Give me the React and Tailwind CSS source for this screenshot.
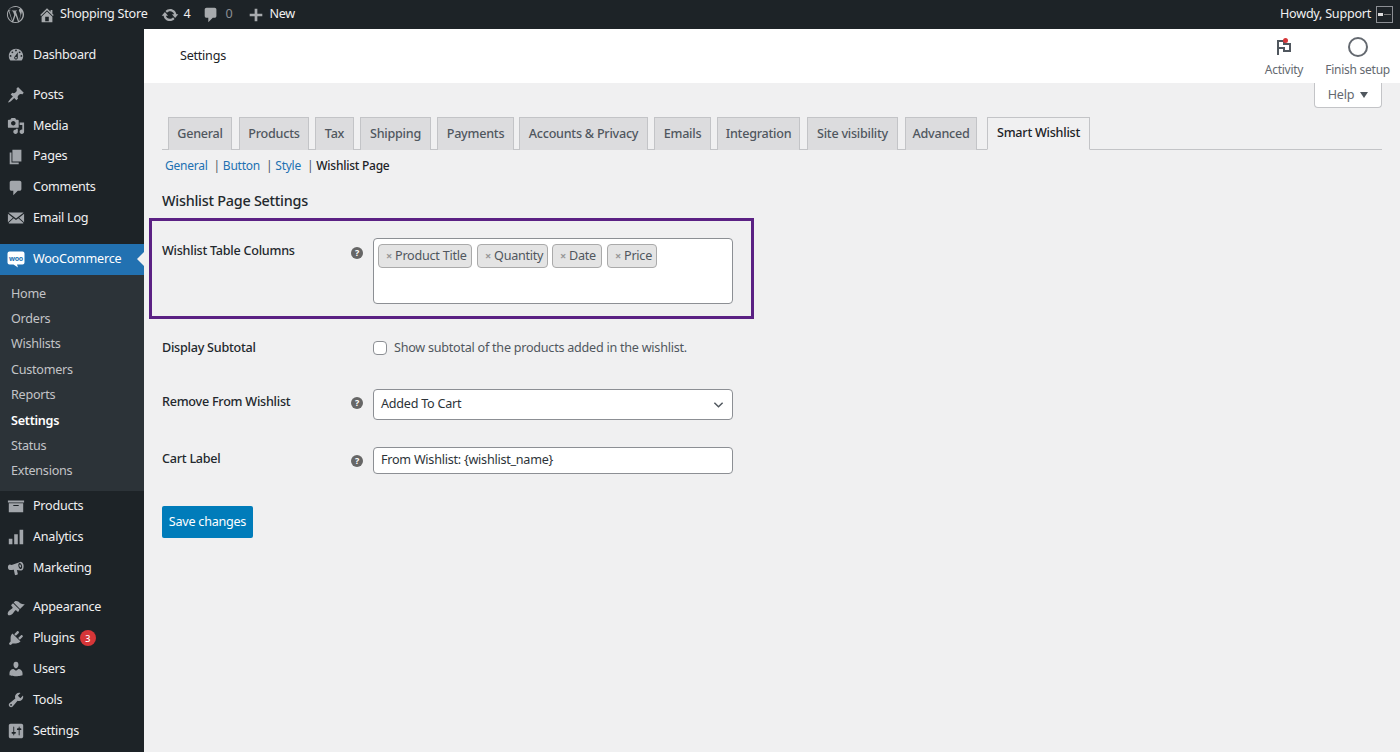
import React from "react";

const P = {
  dashboard: "M3.76 16h12.48c1.1-1.37 1.76-3.11 1.76-5 0-4.42-3.58-8-8-8s-8 3.58-8 8c0 1.89.66 3.63 1.76 5zM10 4c.55 0 1 .45 1 1s-.45 1-1 1-1-.45-1-1 .45-1 1-1zM6 6c.55 0 1 .45 1 1s-.45 1-1 1-1-.45-1-1 .45-1 1-1zm8 0c.55 0 1 .45 1 1s-.45 1-1 1-1-.45-1-1 .45-1 1-1zm-5.37 5.55L12 7v6c0 1.1-.9 2-2 2s-2-.9-2-2c0-.57.24-1.08.63-1.45zM4 10c.55 0 1 .45 1 1s-.45 1-1 1-1-.45-1-1 .45-1 1-1zm12 0c.55 0 1 .45 1 1s-.45 1-1 1-1-.45-1-1 .45-1 1-1zm-5 3c0-.55-.45-1-1-1s-1 .45-1 1 .45 1 1 1 1-.45 1-1z",
  post: "M10.44 3.02l1.82-1.82 6.36 6.35-1.83 1.82c-1.05-.68-2.48-.57-3.41.36l-.75.75c-.92.93-1.04 2.35-.35 3.41l-1.83 1.82-2.41-2.41-2.8 2.79c-.42.42-3.38 2.71-3.8 2.29s1.86-3.39 2.28-3.81l2.79-2.79L4.1 9.36l1.83-1.82c1.05.69 2.48.57 3.4-.36l.75-.75c.93-.92 1.05-2.35.36-3.41z",
  media: "M13 11V4c0-.55-.45-1-1-1h-1.67L9 1H5L3.67 3H2c-.55 0-1 .45-1 1v7c0 .55.45 1 1 1h10c.55 0 1-.45 1-1zM7 4.5c1.38 0 2.5 1.12 2.5 2.5S8.38 9.5 7 9.5 4.5 8.38 4.5 7 5.62 4.5 7 4.5zM14 6h5v10.5c0 1.38-1.12 2.5-2.5 2.5S14 17.88 14 16.5s1.12-2.5 2.5-2.5c.17 0 .34.02.5.05V9h-3V6zm-4 8.05V13h2v3.5c0 1.38-1.12 2.5-2.5 2.5S7 17.88 7 16.5 8.12 14 9.5 14c.17 0 .34.02.5.05z",
  page: "M6 15V2h10v13H6zm-1 1h8v2H3V5h2v11z",
  comment: "M5 2h9c1.1 0 2 .9 2 2v7c0 1.1-.9 2-2 2h-2l-5 5v-5H5c-1.1 0-2-.9-2-2V4c0-1.1.9-2 2-2z",
  email: "M2.5 4h15c.3 0 .6.1.8.3L10 10.6 1.7 4.3c.2-.2.5-.3.8-.3zM1 5.4l5.6 4.3L1 14.6V5.4zm18 0v9.2l-5.6-4.9L19 5.4zM7.4 10.3L10 12.3l2.6-2L18.4 15.6c-.2.3-.5.4-.9.4h-15c-.4 0-.7-.1-.9-.4l5.8-5.3z",
  archive: "M19 4v2H1V4h18zM2 7h16v10H2V7zm11 3V9H7v1h6z",
  chart: "M18 18V2h-4v16h4zm-6 0V7H8v11h4zm-6 0v-6H2v6h4z",
  megaphone: "M18.15 5.94c.46 1.62.38 3.22-.02 4.48-.42 1.28-1.26 2.13-2.27 2.35-.3.07-.6.08-.9.03L11 12.3l1 4.2c.1.5-.2.9-.7 1l-1.6.4c-.5.1-.9-.2-1-.7L7.6 12l-2.3.2c-.6-.3-1.4.1-2.1.1C2 12.3 1 10.9 1 9.2c0-1.7 1-3.1 2.2-3.1.7 0 1.4.3 2 .7l9.4-3.5c.4-.1.8-.2 1.2-.1 1.1.2 1.9 1.3 2.35 2.74zM15.6 11.2c1.1-.3 1.5-2 1-3.9-.5-1.9-1.7-3.1-2.8-2.8-1.1.3-1.5 2-1 3.9.5 1.9 1.7 3.1 2.8 2.8zm-.5-1.9c.5-.1.7-.9.4-1.8-.2-.9-.8-1.5-1.3-1.4-.5.1-.7.9-.4 1.8.2.9.8 1.5 1.3 1.4z",
  appearance: "M14.48 11.06L7.41 3.99l1.5-1.5c.5-.56 2.3-.47 3.51.32 1.21.8 1.43 1.28 2.91 2.1 1.18.64 2.45 1.26 4.45.85zm-.71.71L6.7 4.7 4.93 6.47c-.39.39-.39 1.02 0 1.41l1.06 1.06c.39.39.39 1.03 0 1.42-.6.6-1.43 1.11-2.21 1.69-.35.26-.7.53-1.01.84C1.43 13.73 0 16.5 1.18 17.68c1.17 1.18 3.95-.25 5.29-1.59.31-.31.58-.66.84-1.01.58-.78 1.09-1.61 1.69-2.21.39-.39 1.02-.39 1.41 0l1.06 1.06c.39.39 1.02.39 1.41 0z",
  plugins: "M13.11 4.36L9.87 7.6 8 5.73l3.24-3.24c.35-.34 1.05-.2 1.56.32.52.51.66 1.21.31 1.55zm-8 1.77l.91-1.12 9.01 9.01-1.19.84c-.71.71-2.63 1.16-3.82 1.16H6.14L4.9 17.26c-.59.59-1.54.59-2.12 0-.59-.58-.59-1.53 0-2.12l1.24-1.24v-3.88c0-1.13.4-3.19 1.09-3.89zm7.26 3.97l3.24-3.24c.34-.35 1.04-.21 1.55.31.52.51.66 1.21.31 1.55l-3.24 3.25z",
  users: "M10 9.25c-2.27 0-2.73-3.44-2.73-3.44C7 4.02 7.82 2 9.97 2c2.16 0 2.98 2.02 2.71 3.81 0 0-.41 3.44-2.68 3.44zm0 2.57L12.72 10c2.39 0 4.52 2.33 4.52 4.53v2.49s-3.65 1.13-7.24 1.13c-3.65 0-7.24-1.13-7.24-1.13v-2.49c0-2.25 1.94-4.48 4.47-4.48z",
  tools: "M16.68 9.77c-1.34 1.34-3.3 1.67-4.95.99l-5.41 6.52c-.99.99-2.59.99-3.58 0s-.99-2.59 0-3.57l6.52-5.42c-.68-1.65-.35-3.61.99-4.95 1.28-1.28 3.12-1.62 4.72-1.06l-2.89 2.89 2.82 2.82 2.86-2.87c.53 1.58.18 3.39-1.08 4.65zM3.81 16.21c.4.39 1.04.39 1.43 0 .4-.4.4-1.04 0-1.43-.39-.4-1.03-.4-1.43 0-.39.39-.39 1.03 0 1.43z",
  settings: "M18 16V4c0-1.1-.9-2-2-2H4c-1.1 0-2 .9-2 2v12c0 1.1.9 2 2 2h12c1.1 0 2-.9 2-2zM8 11h1c.55 0 1 .45 1 1s-.45 1-1 1H8v1.5c0 .28-.22.5-.5.5s-.5-.22-.5-.5V13H6c-.55 0-1-.45-1-1s.45-1 1-1h1V5.5c0-.28.22-.5.5-.5s.5.22.5.5V11zm5-2h-1c-.55 0-1-.45-1-1s.45-1 1-1h1V5.5c0-.28.22-.5.5-.5s.5.22.5.5V7h1c.55 0 1 .45 1 1s-.45 1-1 1h-1v5.5c0 .28-.22.5-.5.5s-.5-.22-.5-.5V9z",
  update: "M10.2 3.28c3.53 0 6.43 2.61 6.92 6h2.08l-3.5 4-3.5-4h2.32c-.45-1.97-2.21-3.45-4.32-3.45-1.45 0-2.73.71-3.54 1.78L4.95 5.66C6.23 4.2 8.11 3.28 10.2 3.28zm-.4 13.44c-3.52 0-6.43-2.61-6.92-6H.8l3.5-4c1.17 1.33 2.33 2.67 3.5 4H5.48c.45 1.97 2.21 3.45 4.32 3.45 1.45 0 2.73-.71 3.54-1.78l1.71 1.95c-1.28 1.46-3.15 2.38-5.25 2.38z",
  home: "M16 8.5l1.53 1.53-1.06 1.06L10 4.62l-6.47 6.47-1.06-1.06L10 2.5l4 4v-2h2v4zm-6-2.46l6 5.99V18H4v-5.97zM12 17v-5H8v5h4z",
  plus: "M17 8.5v3h-5.5V17h-3v-5.5H3v-3h5.5V3h3v5.5z",
  wp: "M10 1C5 1 1 5 1 10s4 9 9 9 9-4 9-9-4-9-9-9zm0 1c1.9 0 3.7.7 5.1 1.9-.9 0-1.6.8-1.6 1.7 0 .8.5 1.4 1 2.2.4.6.7 1.4.7 2.6 0 .8-.3 1.8-.7 3.1l-.9 3-3.3-9.9c.5 0 1-.1 1-.1.5-.1.4-.8-.1-.8 0 0-1.5.1-2.4.1-.9 0-2.3-.1-2.3-.1-.5 0-.6.8-.1.8 0 0 .5.1.9.1l1.4 3.8-2 5.9L3.4 5.9c.5 0 1-.1 1-.1.5-.1.4-.8-.1-.8 0 0-1 .1-1.6.1C4.1 3.2 6.9 2 10 2zM2 10c0-1.2.3-2.2.7-3.3l3.8 10.5C3.9 15.9 2 13.2 2 10zm8 8c-.8 0-1.5-.1-2.3-.3l2.4-7 2.5 6.8c0 .1 0 .1.1.1-.8.3-1.7.4-2.7.4zm3.6-.9l2.4-7c.4-1.1.6-2 .6-2.8 0-.3 0-.6-.1-.8.6 1.1 1 2.4 1 3.8-.1 2.9-1.7 5.4-3.9 6.8z",
};

const Ico = ({ d, className = "w-[18px] h-[18px] text-[#a2a6ab]" }) => (
  <svg viewBox="0 0 20 20" fill="currentColor" fillRule="evenodd" className={className}><path d={d} /></svg>
);

const Row = ({ icon, label, mt = "", children }) => (
  <div className={`flex items-center h-[30.8px] pl-[7px] ${mt}`}>
    <span className="w-[26px] flex shrink-0"><Ico d={icon} /></span>
    <span className="text-[#f0f0f1]">{label}</span>
    {children}
  </div>
);

const subs = ["Home", "Orders", "Wishlists", "Customers", "Reports", "Settings", "Status", "Extensions"];

const tabs = [
  ["General", "w-[64px] ml-[6px]"],
  ["Products", "w-[70px] ml-[7px]"],
  ["Tax", "w-[39px] ml-[6px]"],
  ["Shipping", "w-[71px] ml-[6px]"],
  ["Payments", "w-[77px] ml-[6px]"],
  ["Accounts & Privacy", "w-[129px] ml-[5px]"],
  ["Emails", "w-[57px] ml-[6px]"],
  ["Integration", "w-[83px] ml-[6px]"],
  ["Site visibility", "w-[91px] ml-[7px]"],
  ["Advanced", "w-[72px] ml-[7px]"],
];

const Help = ({ className = "" }) => (
  <span className={`w-[12px] h-[12px] rounded-full bg-[#666] text-white text-[9px] font-bold leading-[12px] text-center block ${className}`}>?</span>
);

const Chip = ({ t, w }) => (
  <span className={`h-[24px] ${w} shrink-0 flex items-center pl-[7px] bg-[#e4e4e4] border border-[#aaaaaa] rounded-[4px] text-[#50575e]`}>
    <span className="text-[#999] font-bold text-[11px] mr-[3px]">×</span>{t}
  </span>
);

export default function App() {
  return (
    <div className="h-[752px] w-[1400px] overflow-hidden flex flex-col bg-[#f0f0f1] text-[12.6px] tracking-[-0.25px] font-['Noto_Sans',sans-serif]">
      <header className="h-[29px] shrink-0 bg-[#1d2327] flex items-center text-[#f0f0f1] leading-none">
        <Ico d={P.wp} className="w-[19px] h-[19px] ml-[6px] text-[#a7aaad]" />
        <Ico d={P.home} className="w-[18px] h-[18px] ml-[13px] text-[#a7aaad]" />
        <span className="ml-[4px]">Shopping Store</span>
        <Ico d={P.update} className="w-[18px] h-[18px] ml-[13px] text-[#a7aaad]" />
        <span className="ml-[5px]">4</span>
        <Ico d={P.comment} className="w-[18px] h-[18px] ml-[12px] text-[#a7aaad]" />
        <span className="ml-[5px] text-[#8c8f94]">0</span>
        <Ico d={P.plus} className="w-[18px] h-[18px] ml-[15px] text-[#a7aaad]" />
        <span className="ml-[4px]">New</span>
        <span className="ml-auto">Howdy, Support</span>
        <span className="w-[17px] h-[17px] ml-[5px] mr-[7px] border border-[#8c8f94] bg-[#1d2327] flex items-center pl-[1px]">
          <span className="w-[5px] h-[3px] bg-[#ddd]" />
          <span className="w-[7px] h-px bg-[#777] ml-px" />
        </span>
      </header>

      <div className="flex flex-1 min-h-0">
        <aside className="w-[144px] shrink-0 bg-[#1d2327] pt-[11px] leading-none">
          <Row icon={P.dashboard} label="Dashboard" />
          <Row icon={P.post} label="Posts" mt="mt-[9px]" />
          <Row icon={P.media} label="Media" />
          <Row icon={P.page} label="Pages" />
          <Row icon={P.comment} label="Comments" />
          <Row icon={P.email} label="Email Log" />
          <div className="relative flex items-center h-[31px] mt-[10px] pl-[7px] bg-[#2271b1] text-white">
            <span className="w-[26px] flex shrink-0">
              <svg viewBox="0 0 18 18" className="w-[18px] h-[18px]">
                <path d="M2.5 1.5h13a2 2 0 0 1 2 2v9a2 2 0 0 1-2 2H10l1 3-4.5-3H2.5a2 2 0 0 1-2-2v-9a2 2 0 0 1 2-2z" fill="#fff" />
                <text x="9" y="10.5" textAnchor="middle" fontSize="7" fontWeight="700" letterSpacing="-0.3" fill="#2271b1">woo</text>
              </svg>
            </span>
            WooCommerce
            <span className="absolute right-0 top-[8px] border-y-[7.5px] border-r-[7px] border-y-transparent border-r-[#f0f0f1]" />
          </div>
          <div className="bg-[#2c3338] pt-[6.5px] pb-[6.5px] text-[#c3c4c7]">
            {subs.map((s) => (
              <div key={s} className={`h-[25.4px] flex items-center pl-[11px] ${s === "Settings" ? "text-white font-semibold" : ""}`}>{s}</div>
            ))}
          </div>
          <Row icon={P.archive} label="Products" />
          <Row icon={P.chart} label="Analytics" />
          <Row icon={P.megaphone} label="Marketing" />
          <Row icon={P.appearance} label="Appearance" mt="mt-[9px]" />
          <Row icon={P.plugins} label="Plugins">
            <span className="ml-[5px] w-[16px] h-[16px] rounded-full bg-[#d63638] text-white text-[9px] font-medium flex items-center justify-center">3</span>
          </Row>
          <Row icon={P.users} label="Users" />
          <Row icon={P.tools} label="Tools" />
          <Row icon={P.settings} label="Settings" />
        </aside>

        <main className="flex-1 min-w-0">
          <div className="h-[54px] bg-white flex items-center pl-[36px] text-[#1d2327] relative">
            <span>Settings</span>
            <div className="ml-auto flex text-[#646970] text-[12px] mr-[10px]">
              <div className="flex flex-col items-center mr-[22px]">
                <span className="relative h-[26px] flex items-center">
                  <svg viewBox="0 0 20 20" className="w-[20px] h-[20px]" fill="none" stroke="#50575e" strokeWidth="2">
                    <path d="M4 18V4h6v3h6v7h-6v-3H4" />
                  </svg>
                  <span className="absolute top-[4px] left-[9px] w-[5px] h-[5px] rounded-full bg-[#d63638]" />
                </span>
                <span className="mt-[1px]">Activity</span>
              </div>
              <div className="flex flex-col items-center">
                <span className="h-[26px] flex items-center">
                  <span className="w-[20px] h-[20px] rounded-full border-2 border-[#646970]" />
                </span>
                <span className="mt-[1px]">Finish setup</span>
              </div>
            </div>
          </div>

          <div className="px-[18px]">
            <div className="flex justify-end">
              <div className="w-[68px] h-[25px] bg-white border border-t-0 border-[#c3c4c7] rounded-b-[4px] flex items-center justify-center gap-[6px] text-[#646970]">
                Help <span className="border-x-[4px] border-t-[6px] border-x-transparent border-t-[#50575e]" />
              </div>
            </div>

            <nav className="mt-[9px] h-[33px] flex border-b border-[#c3c4c7] font-medium text-[#50575e]">
              {tabs.map(([t, c]) => (
                <div key={t} className={`h-[33px] flex items-center justify-center bg-[#dcdcde] border border-b-0 border-[#c3c4c7] whitespace-nowrap ${c}`}>{t}</div>
              ))}
              <div className="h-[33px] w-[103px] ml-[10px] flex items-center justify-center bg-[#f0f0f1] border border-[#c3c4c7] border-b-[#f0f0f1] text-[#1d2327] whitespace-nowrap">Smart Wishlist</div>
            </nav>

            <div className="mt-[8px] h-[16px] flex items-center text-[12px] text-[#2271b1] ml-[3px] leading-none">
              <span>General</span>
              <span className="ml-[6px] mr-[3px] text-[#50575e]">|</span>
              <span>Button</span>
              <span className="ml-[6px] mr-[3px] text-[#50575e]">|</span>
              <span>Style</span>
              <span className="ml-[6px] mr-[3px] text-[#50575e]">|</span>
              <span className="text-[#1d2327] font-medium">Wishlist Page</span>
            </div>

            <h2 className="mt-[17px] h-[20px] flex items-center text-[14.4px] font-medium text-[#23282d]">Wishlist Page Settings</h2>

            <section className="mt-[7px] -ml-[13px] w-[605px] h-[101px] border-[3px] border-[#5b2184] pl-[10px] pt-[17px] grid grid-cols-[189px_22px_360px]">
              <span className="pt-[3px] leading-[20px] font-medium text-[#23282d]">Wishlist Table Columns</span>
              <Help className="mt-[9px]" />
              <div className="h-[66px] bg-white border border-[#8c8f94] rounded-[4px] pl-[4px] pt-[5px] flex items-start text-[12.6px]">
                <Chip t="Product Title" w="w-[94px]" />
                <span className="w-[5px] shrink-0" />
                <Chip t="Quantity" w="w-[71px]" />
                <span className="w-[4px] shrink-0" />
                <Chip t="Date" w="w-[50px]" />
                <span className="w-[5px] shrink-0" />
                <Chip t="Price" w="w-[50px]" />
              </div>
            </section>

            <div className="mt-[20px] h-[16px] grid grid-cols-[211px_360px] items-center">
              <span className="font-medium text-[#23282d] leading-[16px]">Display Subtotal</span>
              <div className="flex items-center text-[#50575e]">
                <span className="w-[14px] h-[14px] bg-white border border-[#8c8f94] rounded-[4px]" />
                <span className="ml-[7px]">Show subtotal of the products added in the wishlist.</span>
              </div>
            </div>

            <div className="mt-[34px] grid grid-cols-[189px_22px_360px]">
              <span className="pt-[3px] leading-[20px] font-medium text-[#23282d]">Remove From Wishlist</span>
              <Help className="mt-[8px]" />
              <div className="h-[31px] bg-white border border-[#8c8f94] rounded-[4px] pl-[7px] pr-[8px] flex items-center justify-between text-[#2c3338]">
                Added To Cart
                <svg viewBox="0 0 12 12" className="w-[11px] h-[11px]" fill="none" stroke="#50575e" strokeWidth="1.6"><path d="M1.5 4l4.5 4.5L10.5 4" /></svg>
              </div>
            </div>

            <div className="mt-[27px] grid grid-cols-[189px_22px_360px]">
              <span className="pt-[2px] leading-[20px] font-medium text-[#23282d]">Cart Label</span>
              <Help className="mt-[8px]" />
              <div className="h-[27px] bg-white border border-[#8c8f94] rounded-[4px] pl-[7px] flex items-center text-[#2c3338]">From Wishlist: {"{wishlist_name}"}</div>
            </div>

            <button className="mt-[32px] w-[91px] h-[32px] bg-[#007cba] rounded-[2px] text-white flex items-center justify-center">Save changes</button>
          </div>
        </main>
      </div>
    </div>
  );
}
